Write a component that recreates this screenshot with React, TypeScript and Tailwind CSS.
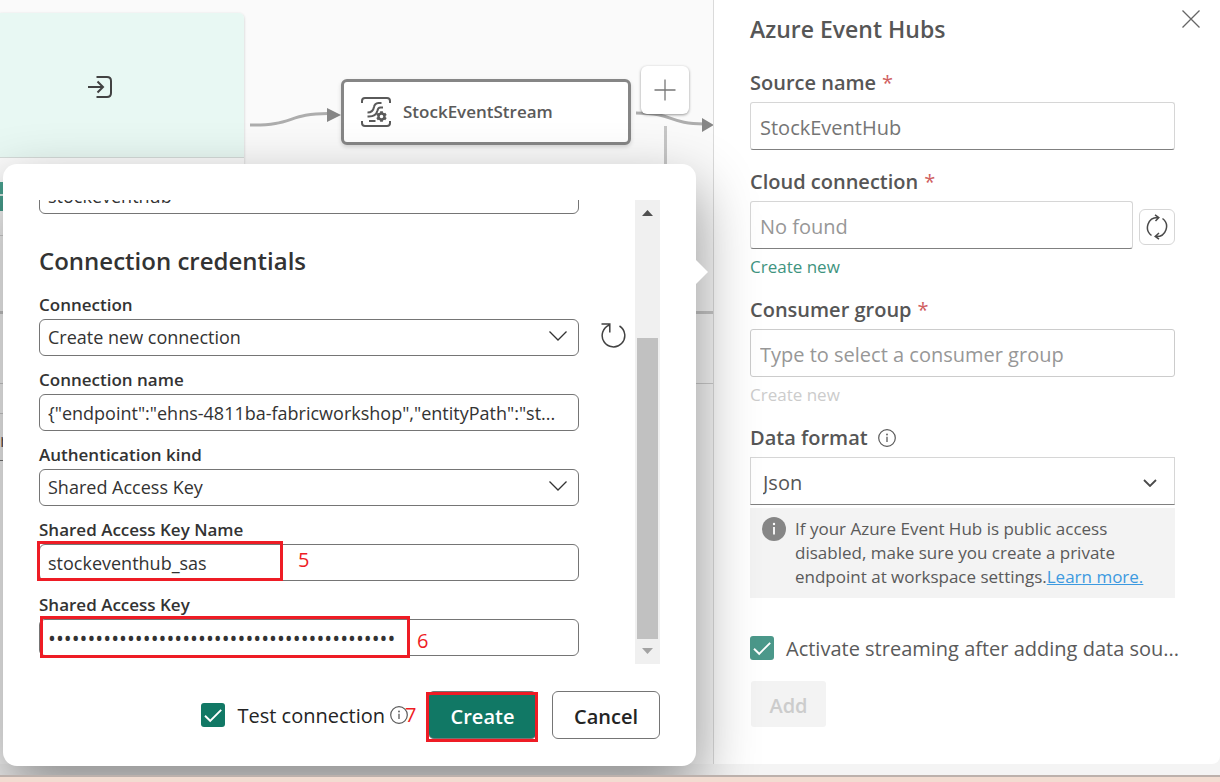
import React, { useState } from "react";

function Chevron({ className }: { className: string }) {
  return (
    <svg viewBox="0 0 20 10" className={className} fill="none" stroke="currentColor" aria-hidden="true">
      <path d="M1.500 0.500 L10 9 L18.500 0.500" strokeWidth="1.300" />
    </svg>
  );
}

function InfoIcon({ className }: { className: string }) {
  return (
    <svg viewBox="0 0 18 18" className={className} fill="none" stroke="currentColor" aria-hidden="true">
      <circle cx="9" cy="9" r="8.300" strokeWidth="1.200" />
      <path d="M9 7.800 V13" strokeWidth="1.300" />
      <circle cx="9" cy="5.500" r="0.900" fill="currentColor" stroke="none" />
    </svg>
  );
}

function Check({ id, className }: { id: string; className: string }) {
  const [on, setOn] = useState(true);
  return (
    <span className="relative flex h-6 w-6 shrink-0">
      <input
        id={id}
        type="checkbox"
        checked={on}
        onChange={(e) => setOn(e.target.checked)}
        className={`h-6 w-6 appearance-none rounded-[3px] border border-transparent ${className}`}
      />
      {on && (
        <svg viewBox="0 0 24 24" className="pointer-events-none absolute inset-0 h-6 w-6" fill="none" aria-hidden="true">
          <path d="M4 12.800 L9.200 17.800 L20.200 6.800" stroke="#fff" strokeWidth="1.900" />
        </svg>
      )}
    </span>
  );
}

function Canvas() {
  return (
    <main className="relative flex-1 overflow-hidden bg-[#fafafa]">
      <div className="absolute top-[13px] left-0 h-[760px] w-[244px] rounded-tr-[5px] bg-[#fbfbfb] shadow-[0_1px_3px_rgba(0,0,0,0.2)]">
        <div className="flex h-[145px] justify-center rounded-tr-[5px] border-b border-[#d5dbd9] bg-[#e8f8f3] pt-[63px] pr-11">
          <svg viewBox="0 0 24 22" className="h-[22px] w-6" fill="none" stroke="#424242" strokeWidth="2" aria-hidden="true">
            <path d="M8.500 1 H19 Q23 1 23 5 V17 Q23 21 19 21 H8.500" />
            <path d="M0 11 H15 M9.500 5.500 L15 11 L9.500 16.500" />
          </svg>
        </div>
      </div>
      <div className="absolute top-[182px] left-0 h-[29px] w-[6px] bg-[#48a08e]" />
      <div className="absolute top-[194px] left-0 h-[2px] w-[6px] bg-[#dcebe7]" />
      <div className="absolute top-[235px] left-0 h-px w-[6px] bg-[#d6d6d6]" />
      <div className="absolute top-[311px] left-0 h-[3px] w-full bg-[#c9c9c9]" />
      <div className="absolute top-[383px] left-0 h-px w-full bg-[#cfcfcf]" />
      <div className="absolute top-[413px] left-0 h-12 w-[6px] overflow-hidden border-y border-t-[#cfcfcf] border-b-[#777] bg-[#f8f8f8] pt-[14px] text-[18px] leading-6 text-[#555]">
        r
      </div>
      <div className="absolute top-[126px] left-[664px] h-[60px] w-[3px] bg-[#c6c6c6]" />

      <svg viewBox="0 0 713 200" className="absolute top-0 left-0 h-[200px] w-[713px]" fill="none" aria-hidden="true">
        <path d="M250 125 C293 126 288 113.500 328 113.500" stroke="#adadad" strokeWidth="3" />
        <path d="M327 108 L341 115 L327 122 Z" fill="#868686" />
        <path d="M636 113 C675 113 668 124 704 124" stroke="#adadad" strokeWidth="3" />
        <path d="M702 118 L714 125 L702 132 Z" fill="#868686" />
      </svg>

      <div className="absolute top-[79px] left-[341px] flex h-[66px] w-[290px] items-center gap-3 rounded-md border-[3px] border-[#868686] bg-white pl-[17px] shadow-[0_2px_4px_rgba(0,0,0,0.15)]">
        <svg viewBox="0 0 30 30" className="h-[30px] w-[30px]" fill="none" stroke="#5a5a5a" strokeWidth="2" aria-hidden="true">
          <path d="M1 6 V4 Q1 1 4 1 H26 Q29 1 29 4 V6 M1 24 V26 Q1 29 4 29 H26 Q29 29 29 26 V24" />
          <path d="M20.500 6 H17.500 Q13.500 6.500 13 10 Q12 15.500 6.500 15.500 M22 10.500 H19.500 Q17 10.500 16.500 13.500 Q15 19.500 8 19.500 H6.500 M8 24 H14.500" />
          <circle cx="20.500" cy="19.500" r="3" strokeWidth="2.400" />
          <path d="M20.500 14.300 V16 M20.500 23 V24.700 M16 16.900 L17.500 17.800 M23.500 21.200 L25 22.100 M16 22.100 L17.500 21.200 M23.500 17.800 L25 16.900" strokeWidth="2.800" />
        </svg>
        <span className="text-[17px] font-semibold text-[#5a5a5a]">StockEventStream</span>
      </div>

      <button
        type="button"
        aria-label="Add node"
        className="absolute top-[66px] left-[641px] flex h-12 w-12 items-center justify-center rounded-md bg-white shadow-[0_1px_3px_rgba(0,0,0,0.4)]"
      >
        <svg viewBox="0 0 22 22" className="h-[22px] w-[22px]" stroke="#777" strokeWidth="1.300" aria-hidden="true">
          <path d="M11 0.500 V21.500 M0.500 11 H21.500" />
        </svg>
      </button>
    </main>
  );
}

const panelField =
  "h-12 w-full min-w-0 rounded-[3px] border border-[#d6d6d6] border-b-[#808080] bg-white px-[9px] pt-[3px] text-[20px] text-[#757575] placeholder:text-[#979797]";

function PanelLabel({ htmlFor, text, required }: { htmlFor: string; text: string; required?: boolean }) {
  return (
    <label htmlFor={htmlFor} className="text-[20px] leading-7 font-semibold text-[#565656]">
      {text}
      {required && <span className="pl-[6px] font-normal text-[#d0605f]">*</span>}
    </label>
  );
}

function SourcePanel() {
  return (
    <aside className="flex w-[507px] shrink-0 flex-col rounded-br-lg border-l border-[#dadada] bg-white pr-[45px] pl-9">
      <header className="relative pt-[15px]">
        <h1 className="text-[23px] leading-7 font-semibold text-[#565656]">Azure Event Hubs</h1>
        <button type="button" aria-label="Close" className="absolute top-[10px] -right-[25px] h-[18px] w-[18px]">
          <svg viewBox="0 0 18 18" className="h-[18px] w-[18px]" stroke="#666" strokeWidth="1.300" aria-hidden="true">
            <path d="M0.500 0.500 L17.500 17.500 M17.500 0.500 L0.500 17.500" />
          </svg>
        </button>
      </header>

      <div className="mt-[26px] flex flex-col gap-[5px]">
        <PanelLabel htmlFor="source" text="Source name" required />
        <input id="source" type="text" defaultValue="StockEventHub" className={panelField} />
      </div>

      <div className="mt-[18px] flex flex-col gap-[5px]">
        <PanelLabel htmlFor="cloud" text="Cloud connection" required />
        <div className="flex items-end gap-[6px]">
          <input id="cloud" type="text" placeholder="No found" className={panelField} />
          <button
            type="button"
            aria-label="Refresh connections"
            className="mb-1 flex h-9 w-9 shrink-0 items-center justify-center rounded-md border border-[#d6d6d6] bg-white"
          >
            <svg viewBox="0 0 22 26" className="h-[26px] w-[22px]" fill="none" stroke="#4a4a4a" strokeWidth="1.500" aria-hidden="true">
              <path d="M5.500 21.500 A10 10 0 0 1 11.500 3.500 H13 M9 0.800 L12.800 3.600 L9.500 7" />
              <path d="M16.500 4.500 A10 10 0 0 1 10.500 22.500 H9 M13 19 L9.200 22.400 L13 25.200" />
            </svg>
          </button>
        </div>
      </div>
      <a href="#new-connection" className="mt-[6px] self-start text-[17px] leading-6 text-[#3f9480]">
        Create new
      </a>

      <div className="mt-[17px] flex flex-col gap-[5px]">
        <PanelLabel htmlFor="group" text="Consumer group" required />
        <input
          id="group"
          type="text"
          placeholder="Type to select a consumer group"
          className="h-12 w-full rounded-[3px] border border-[#cccccc] bg-white px-[9px] pt-[3px] text-[20px] placeholder:text-[#979797]"
        />
      </div>
      <button type="button" disabled className="mt-[6px] self-start text-[17px] leading-6 text-[#cccccc]">
        Create new
      </button>

      <div className="mt-[17px] flex flex-col gap-[5px]">
        <div className="flex items-center gap-[10px]">
          <PanelLabel htmlFor="format" text="Data format" />
          <InfoIcon className="h-[18px] w-[18px] text-[#5a5a5a]" />
        </div>
        <div className="relative">
          <select
            id="format"
            className="h-12 w-full appearance-none border border-[#d6d6d6] border-b-[#808080] bg-white px-3 pt-[3px] text-[20px] text-[#565656]"
          >
            <option>Json</option>
          </select>
          <svg viewBox="0 0 14 8" className="pointer-events-none absolute top-[22px] right-[18px] h-2 w-[14px]" fill="none" stroke="#4a4a4a" strokeWidth="1.800" aria-hidden="true">
            <path d="M1 1 L7 7 L13 1" />
          </svg>
        </div>
      </div>

      <div className="mt-[3px] flex gap-[9px] bg-[#f3f3f3] px-3 pt-[9px] pb-[9px]">
        <svg viewBox="0 0 24 24" className="h-6 w-6 shrink-0" aria-hidden="true">
          <circle cx="12" cy="12" r="12" fill="#868686" />
          <path d="M12 10 V17.500" stroke="#fff" strokeWidth="1.800" />
          <circle cx="12" cy="7" r="1.200" fill="#fff" />
        </svg>
        <p className="text-[17px] leading-6 text-[#5a5a5a]">
          If your Azure Event Hub is public access
          <br />
          disabled, make sure you create a private
          <br />
          endpoint at workspace settings.
          <a href="#learn" className="text-[#3d9ae0] underline">
            Learn more.
          </a>
        </p>
      </div>

      <div className="mt-[35px] -mr-5 flex items-center gap-3">
        <Check id="activate" className="bg-[#4b988a]" />
        <label htmlFor="activate" className="pt-[2px] text-[20px] leading-7 whitespace-nowrap text-[#5a5a5a]">
          Activate streaming after adding data sou...
        </label>
      </div>

      <button type="button" disabled className="mt-[18px] ml-px h-[46px] w-[75px] rounded-[3px] bg-[#f3f3f3] pt-[3px] text-[20px] font-semibold text-[#cccccc]">
        Add
      </button>
    </aside>
  );
}

const dialogField =
  "h-[37px] w-full appearance-none rounded-md border border-[#757575] bg-white px-2 text-[18px] text-[#333333]";
const dialogLabel = "mb-[2px] block text-[17px] leading-6 font-semibold text-[#333333]";
const mark = "pointer-events-none absolute border-[3px] border-[#ee1c25]";
const markNumber = "pointer-events-none absolute text-[20px] leading-6 text-[#ee1c25]";

function ConnectionDialog() {
  return (
    <section
      role="dialog"
      aria-label="Connection credentials"
      className="absolute top-[164px] left-[3px] flex w-[693px] flex-col rounded-[14px] bg-white px-9 pt-9 pb-[27px] shadow-[0_25px_60px_rgba(0,0,0,0.43)]"
    >
      <svg viewBox="0 0 12 24" className="absolute top-24 -right-3 h-6 w-3" fill="#fff" aria-hidden="true">
        <path d="M0 0 L12 12 L0 24 Z" />
      </svg>

      <div className="-ml-2 flex h-[464px]">
        <div className="flex flex-1 flex-col justify-end overflow-hidden pr-14 pb-2 pl-2">
          <input aria-label="Event hub" type="text" defaultValue="stockeventhub" className={`${dialogField} shrink-0`} />
          <h2 className="mt-[31px] mb-1 text-[24px] leading-8 font-semibold text-[#333333]">Connection credentials</h2>

          <div className="relative mt-3">
            <label htmlFor="connection" className={dialogLabel}>
              Connection
            </label>
            <select id="connection" className={dialogField}>
              <option>Create new connection</option>
            </select>
            <Chevron className="pointer-events-none absolute right-[11px] bottom-[15px] h-[10px] w-5 text-[#333333]" />
            <button type="button" aria-label="Refresh" className="absolute -right-[47px] bottom-2 h-[25px] w-[25px]">
              <svg viewBox="0 0 25 25" className="h-[25px] w-[25px]" fill="none" stroke="#424242" strokeWidth="1.500" aria-hidden="true">
                <path d="M18.500 3 A11.300 11.300 0 1 1 8.500 2 M0.500 1 H8.800 V9.500" />
              </svg>
            </button>
          </div>

          <div className="mt-3">
            <label htmlFor="connection-name" className={dialogLabel}>
              Connection name
            </label>
            <input
              id="connection-name"
              type="text"
              defaultValue={'{"endpoint":"ehns-4811ba-fabricworkshop","entityPath":"st...'}
              className={dialogField}
            />
          </div>

          <div className="relative mt-3">
            <label htmlFor="auth" className={dialogLabel}>
              Authentication kind
            </label>
            <select id="auth" className={dialogField}>
              <option>Shared Access Key</option>
            </select>
            <Chevron className="pointer-events-none absolute right-[11px] bottom-[15px] h-[10px] w-5 text-[#333333]" />
          </div>

          <div className="relative mt-3">
            <label htmlFor="key-name" className={dialogLabel}>
              Shared Access Key Name
            </label>
            <input id="key-name" type="text" defaultValue="stockeventhub_sas" className={dialogField} />
            <span className={`${mark} bottom-0 -left-[2px] h-10 w-[246px]`} />
            <span className={`${markNumber} bottom-[9px] left-[259px]`}>5</span>
          </div>

          <div className="relative mt-3">
            <label htmlFor="key" className={dialogLabel}>
              Shared Access Key
            </label>
            <input
              id="key"
              type="password"
              defaultValue={"x".repeat(44)}
              className="h-[37px] w-full rounded-md border border-[#757575] bg-white px-2 text-[21px] text-[#333333]"
            />
            <span className={`${mark} -bottom-[2px] left-px h-[42px] w-[370px]`} />
            <span className={`${markNumber} bottom-[3px] left-[378px]`}>6</span>
          </div>
        </div>

        <div className="flex w-[25px] flex-col items-center bg-[#f0f0f0]" aria-hidden="true">
          <svg viewBox="0 0 11 6" className="mt-[10px] h-[6px] w-[11px]" fill="#505050">
            <path d="M0 6 L5.500 0 L11 6 Z" />
          </svg>
          <div className="mt-[122px] w-[21px] flex-1 bg-[#c1c1c1]" />
          <svg viewBox="0 0 11 6" className="mt-[9px] mb-[10px] h-[6px] w-[11px]" fill="#a3a3a3">
            <path d="M0 0 L5.500 6 L11 0 Z" />
          </svg>
        </div>
      </div>

      <footer className="mt-[27px] flex items-center justify-end">
        <Check id="test" className="bg-[#117865]" />
        <label htmlFor="test" className="ml-3 pt-[2px] text-[20px] leading-7 text-[#242424]">
          Test connection
        </label>
        <span className="relative ml-[5px]">
          <span className={`${markNumber} top-[-3px] left-[15px]`}>7</span>
          <InfoIcon className="relative h-[18px] w-[18px] text-[#5a5a5a]" />
        </span>
        <span className="relative ml-5">
          <button type="button" className="h-12 w-[109px] rounded-md border border-[#757575] bg-[#117865] pt-1 text-[20px] font-semibold text-white">
            Create
          </button>
          <span className={`${mark} top-px -left-[2px] h-[50px] w-28`} />
        </span>
        <button type="button" className="ml-[15px] h-12 w-[108px] rounded-md border border-[#757575] bg-white pt-1 text-[20px] font-semibold text-[#242424]">
          Cancel
        </button>
      </footer>
    </section>
  );
}

export default function App() {
  return (
    <div className="flex min-h-screen flex-col bg-[#f2dcd1] pb-[5px] font-['Open_Sans','Noto_Sans',sans-serif]">
      <div className="relative flex flex-1 overflow-hidden border-b-2 border-[#bcb1ac] bg-[#f4f4f4] pb-[11px]">
        <Canvas />
        <SourcePanel />
        <ConnectionDialog />
      </div>
    </div>
  );
}
